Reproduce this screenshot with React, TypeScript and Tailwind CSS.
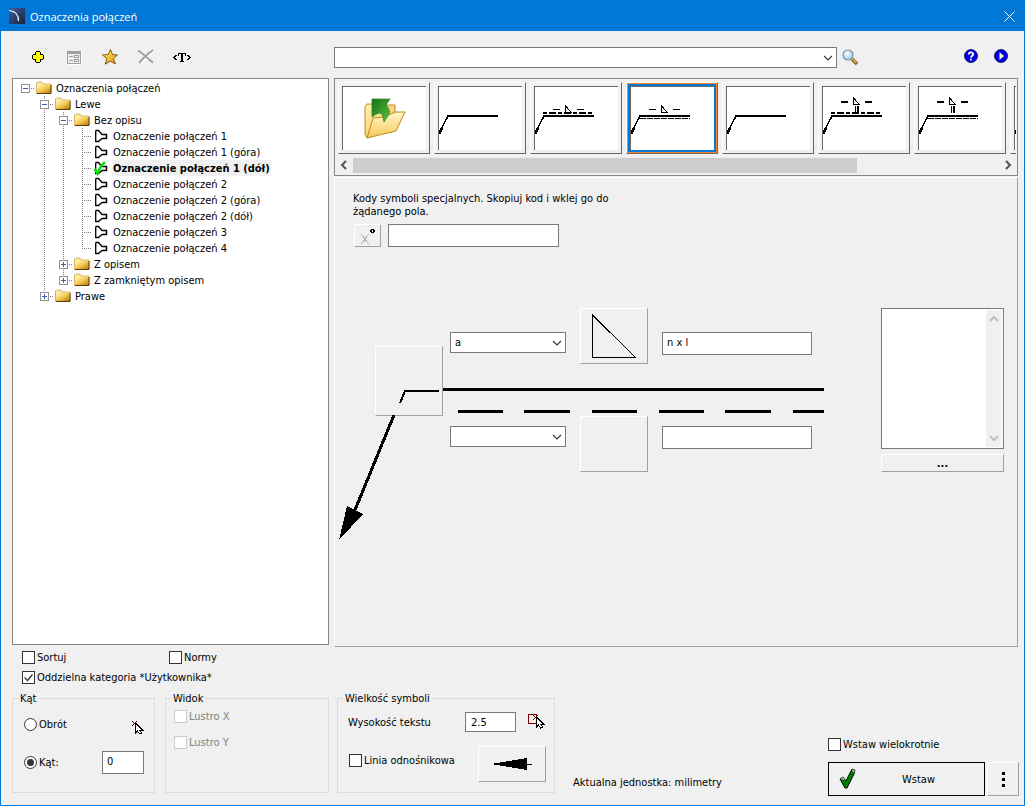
import React, { useState } from 'react';

type TreeNode = {
  id: string;
  label: string;
  open?: boolean;
  children?: TreeNode[];
};

type ThumbKind = 'plain' | 'above' | 'below' | 'above-tall' | 'below-tall';

const TREE: TreeNode = {
  id: 'root',
  label: 'Oznaczenia połączeń',
  open: true,
  children: [
    {
      id: 'lewe',
      label: 'Lewe',
      open: true,
      children: [
        {
          id: 'bez-opisu',
          label: 'Bez opisu',
          open: true,
          children: [
            { id: '1', label: 'Oznaczenie połączeń 1' },
            { id: '1g', label: 'Oznaczenie połączeń 1 (góra)' },
            { id: '1d', label: 'Oznaczenie połączeń 1 (dół)' },
            { id: '2', label: 'Oznaczenie połączeń 2' },
            { id: '2g', label: 'Oznaczenie połączeń 2 (góra)' },
            { id: '2d', label: 'Oznaczenie połączeń 2 (dół)' },
            { id: '3', label: 'Oznaczenie połączeń 3' },
            { id: '4', label: 'Oznaczenie połączeń 4' },
          ],
        },
        { id: 'z-opisem', label: 'Z opisem', children: [] },
        { id: 'z-zamknietym', label: 'Z zamkniętym opisem', children: [] },
      ],
    },
    { id: 'prawe', label: 'Prawe', children: [] },
  ],
};

const THUMBS: ThumbKind[] = ['plain', 'above', 'below', 'plain', 'above-tall', 'below-tall', 'plain'];

const BEVEL = 'border border-t-white border-l-white border-r-[#a0a0a0] border-b-[#a0a0a0]';
const FIELD = 'border border-[#7a7a7a] bg-white outline-none';

/* ---------- icons ---------- */

function AppIcon() {
  return (
    <svg width="16" height="16" viewBox="0 0 16 16">
      <defs>
        <linearGradient id="app" x1="0" y1="0" x2="1" y2="1">
          <stop offset="0" stopColor="#3d5f9c" />
          <stop offset="1" stopColor="#16233f" />
        </linearGradient>
      </defs>
      <rect width="16" height="16" fill="url(#app)" />
      <path d="M0 2.500C6 3 9.500 7 9.500 13" fill="none" stroke="#fff" strokeWidth="1.200" />
    </svg>
  );
}

function PlusIcon() {
  return (
    <svg width="14" height="14" viewBox="0 0 14 14" shapeRendering="crispEdges">
      <path d="M5 1h4v1h1v2h2v1h1v4h-1v1h-2v2h-1v1H5v-1H4v-2H2V9H1V5h1V4h2V2h1z" fill="#000" />
      <path d="M5 2h4v3h3v4H9v3H5V9H2V5h3z" fill="#ff0" />
    </svg>
  );
}

function FormIcon() {
  return (
    <svg width="16" height="16" viewBox="0 0 16 16" shapeRendering="crispEdges">
      <path d="M2 15h13V3h1v13H2z" fill="#fff" />
      <path d="M1 2h14v13H1z" fill="#a0a0a0" />
      <path d="M2 5h12v9H2z" fill="#f0f0f0" />
      <path d="M3 7h4v1H3zM3 11h4v1H3zM8 6h5v3H8zM8 10h5v3H8z" fill="#a0a0a0" />
      <path d="M9 7h3v1H9zM9 11h3v1H9z" fill="#f0f0f0" />
    </svg>
  );
}

function StarIcon() {
  return (
    <svg width="18" height="18" viewBox="0 0 18 18">
      <defs>
        <linearGradient id="star" x1="0" y1="0" x2="1" y2="1">
          <stop offset="0.2" stopColor="#ffe35c" />
          <stop offset="1" stopColor="#e08a08" />
        </linearGradient>
      </defs>
      <path
        d="M9.500 1.500l2 5 5 .5-4 3.800 2 5.200-5.200-2.800-5 3 1.500-5.700L1.500 7l5.800-.5z"
        fill="url(#star)"
        stroke="#8a5c14"
        strokeLinejoin="round"
      />
    </svg>
  );
}

function CrossIcon() {
  return (
    <svg width="18" height="16" viewBox="0 0 18 16" fill="none">
      <path d="M3 3l14 13M17 2L4 15" stroke="#fff" strokeWidth="1.500" />
      <path d="M1 1.500c5 3 10 8 15 12.500" stroke="#a0a0a0" strokeWidth="2" />
      <path d="M16 1C12 4 6 9 2 14" stroke="#a0a0a0" strokeWidth="2" />
    </svg>
  );
}

function TextCodeIcon() {
  return (
    <svg width="18" height="14" viewBox="0 0 18 14" shapeRendering="crispEdges">
      <path d="M3.500 5L1 7.500 3.500 10M14.500 5L17 7.500 14.500 10" fill="none" stroke="#000" />
      <path d="M5 3h8v3h-1V4h-2v7h1v1H7v-1h1V4H6v2H5z" fill="#000" />
    </svg>
  );
}

function SearchIcon() {
  return (
    <svg width="16" height="16" viewBox="0 0 16 16">
      <defs>
        <radialGradient id="lens" cx="0.4" cy="0.35" r="0.7">
          <stop offset="0" stopColor="#f4fbff" />
          <stop offset="1" stopColor="#9cc8ee" />
        </radialGradient>
      </defs>
      <path d="M10 10l5 5" stroke="#7a5a20" strokeWidth="3.400" />
      <path d="M10 9.500l4.500 4.500" stroke="#e8b84a" strokeWidth="1.600" />
      <circle cx="6" cy="6" r="5" fill="url(#lens)" stroke="#7f8fa0" strokeWidth="1.200" />
    </svg>
  );
}

function HelpIcon() {
  return (
    <svg width="14" height="14" viewBox="0 0 14 14">
      <circle cx="7" cy="7" r="6.500" fill="#0000d8" stroke="#000060" strokeWidth="0.800" />
      <path d="M4.800 5.500C4.800 2.800 9.200 2.800 9.200 5.300 9.200 6.900 7 6.800 7 8.700M7 9.700v1.800" fill="none" stroke="#fff" strokeWidth="1.800" />
    </svg>
  );
}

function PlayIcon() {
  return (
    <svg width="14" height="14" viewBox="0 0 14 14">
      <circle cx="7" cy="7" r="6.500" fill="#0000d8" stroke="#000060" strokeWidth="0.800" />
      <path d="M5.500 3l4.500 4-4.500 4z" fill="#fff" />
    </svg>
  );
}

function FolderIcon() {
  return (
    <svg width="16" height="14" viewBox="0 0 16 14">
      <defs>
        <linearGradient id="folder" x1="0" y1="0" x2="1" y2="1">
          <stop offset="0.1" stopColor="#fff0a8" />
          <stop offset="0.5" stopColor="#f3c850" />
          <stop offset="1" stopColor="#b87408" />
        </linearGradient>
      </defs>
      <path d="M.5 12.500V2L1.500 1h4.500l1 2h8v9.500z" fill="#fbe9a0" stroke="#c9a64a" strokeWidth="0.800" />
      <path d="M1 4h14v8H1z" fill="url(#folder)" />
      <path d="M1 12.500h14V4" fill="none" stroke="#5a3c08" />
    </svg>
  );
}

function JointIcon({ checked }: { checked: boolean }) {
  return (
    <svg width="16" height="16" viewBox="0 0 16 16" className="overflow-visible">
      <path
        d="M2.700 2.500H5.500L9 6.500h4.500M13.500 10.500H9L5.500 13.500H2.700V2.500"
        fill="#fff"
        stroke="#000"
        strokeWidth="1.300"
      />
      <path d="M13.500 6v5" stroke="#000" strokeWidth="1.500" />
      {checked && <path d="M1.500 9l3 4.500C6.500 8 8.500 5 12 2" fill="none" stroke="#00e400" strokeWidth="2.400" />}
    </svg>
  );
}

function OpenFolderIcon() {
  return (
    <svg width="42" height="42" viewBox="0 0 42 42">
      <defs>
        <linearGradient id="open-back" x1="0" y1="0" x2="1" y2="1">
          <stop offset="0" stopColor="#fff0b0" />
          <stop offset="1" stopColor="#f0c050" />
        </linearGradient>
        <linearGradient id="open-front" x1="0" y1="0" x2="0" y2="1">
          <stop offset="0" stopColor="#fff6cc" />
          <stop offset="1" stopColor="#f6c95a" />
        </linearGradient>
        <linearGradient id="open-arrow" x1="0" y1="0" x2="1" y2="1">
          <stop offset="0" stopColor="#156f15" />
          <stop offset="1" stopColor="#5cc43c" />
        </linearGradient>
      </defs>
      <path d="M1 9l2-3h6v1h22v20L3 40 1 36z" fill="url(#open-back)" stroke="#c08a1c" />
      <path d="M3 40l6-20 11-1 4-2 8-3h9L32 33z" fill="url(#open-front)" stroke="#c08a1c" strokeLinejoin="round" />
      <path
        d="M8 1h18l-4 6c3 3 4 6 3 9-1 3-3 4-5 8-1-4-1-8-4-9-2 0-4 1-8 4z"
        fill="url(#open-arrow)"
        stroke="#2e8b2e"
        strokeWidth="0.800"
      />
    </svg>
  );
}

function Chevron({ dir, bold, className = '' }: { dir: 'up' | 'down' | 'left' | 'right'; bold?: boolean; className?: string }) {
  const d = {
    up: 'M1 7l4-4 4 4',
    down: 'M1 3l4 4 4-4',
    left: 'M7 1L3 5l4 4',
    right: 'M3 1l4 4-4 4',
  }[dir];
  return (
    <svg width="10" height="10" viewBox="0 0 10 10" className={className}>
      <path d={d} fill="none" stroke="currentColor" strokeWidth={bold ? 2 : 1.1} />
    </svg>
  );
}

function PickIcon({ box }: { box?: boolean }) {
  return (
    <svg width="18" height="18" viewBox={box ? '0 0 18 18' : '-1 -3 18 18'} shapeRendering="crispEdges">
      {box && <path d="M.5 1.500h8v9h-8z" fill="none" stroke="#800000" />}
      <path d="M5 2l5 5M10 2L5 7" stroke={box ? '#800000' : '#400'} fill="none" />
      <path d="M8.500 4v10l2-2 2 3 2-1-2-3h3z" fill="#fff" stroke="#000" />
    </svg>
  );
}

function InsertIcon() {
  return (
    <svg width="18" height="22" viewBox="0 0 18 22">
      <path d="M1 11l3-2 3 4L13 1l3 1-1 4-7 14H6z" fill="#008000" stroke="#000" />
      <path d="M2 11l2-1 1 2M13 2l2 .5-.5 2" fill="none" stroke="#a8a8a8" strokeWidth="1.500" />
    </svg>
  );
}

/* ---------- small controls ---------- */

function Check({ label, defaultChecked, disabled }: { label: string; defaultChecked?: boolean; disabled?: boolean }) {
  return (
    <label className={`flex h-[13px] items-center gap-[2px] whitespace-nowrap ${disabled ? 'text-[#838383]' : ''}`}>
      <span className="grid shrink-0">
        <input
          type="checkbox"
          defaultChecked={defaultChecked}
          disabled={disabled}
          className="peer col-start-1 row-start-1 h-[13px] w-[13px] appearance-none border border-[#333] bg-white disabled:border-[#ccc]"
        />
        <svg viewBox="0 0 13 13" className="pointer-events-none invisible col-start-1 row-start-1 h-[13px] w-[13px] peer-checked:visible">
          <path d="M2.500 6.500l3 3 5-6" fill="none" stroke="#333" strokeWidth="1.300" />
        </svg>
      </span>
      {label}
    </label>
  );
}

function Radio({ label, defaultChecked }: { label: string; defaultChecked?: boolean }) {
  return (
    <label className="flex items-center gap-[2px]">
      <span className="grid shrink-0">
        <input
          type="radio"
          name="angle-mode"
          defaultChecked={defaultChecked}
          className="peer col-start-1 row-start-1 h-[13px] w-[13px] appearance-none rounded-full border border-[#333] bg-white"
        />
        <span className="pointer-events-none invisible col-start-1 row-start-1 h-[7px] w-[7px] place-self-center rounded-full bg-[#333] peer-checked:visible" />
      </span>
      {label}
    </label>
  );
}

function Combo({ label, options = [] }: { label: string; options?: string[] }) {
  return (
    <span className="grid">
      <select aria-label={label} className={`col-start-1 row-start-1 h-[21px] w-full appearance-none pl-1 ${FIELD}`}>
        {options.map((o) => (
          <option key={o}>{o}</option>
        ))}
      </select>
      <Chevron dir="down" className="pointer-events-none col-start-1 row-start-1 mr-1 self-center justify-self-end text-[#333]" />
    </span>
  );
}

/* ---------- tree ---------- */

function Guide({ up, down, right }: { up?: boolean; down?: boolean; right?: boolean }) {
  return (
    <svg width="19" height="16" viewBox="0 0 19 16" shapeRendering="crispEdges" className="shrink-0">
      <g stroke="#808080" strokeDasharray="1 1">
        {up && <path d="M9.500 0v8" />}
        {down && <path d="M9.500 8v8" />}
        {right && <path d="M9 8.500h10" />}
      </g>
    </svg>
  );
}

function TreeItem({
  node,
  trail,
  last,
  selected,
  onSelect,
}: {
  node: TreeNode;
  trail: boolean[];
  last: boolean;
  selected: string;
  onSelect: (id: string) => void;
}) {
  const [open, setOpen] = useState(!!node.open);
  const isRoot = node.id === 'root';
  const active = node.id === selected;

  return (
    <li>
      <div className="flex h-4 items-center">
        {trail.map((line, i) => (
          <Guide key={i} up={line} down={line} />
        ))}
        <span className="grid shrink-0">
          <span className="col-start-1 row-start-1">
            <Guide up={!isRoot} down={!last} right />
          </span>
          {node.children && (
            <button
              aria-label={open ? 'Zwiń' : 'Rozwiń'}
              onClick={() => setOpen(!open)}
              className="relative col-start-1 row-start-1 mt-1 ml-[5px] h-[9px] w-[9px]"
            >
              <svg width="9" height="9" viewBox="0 0 9 9" shapeRendering="crispEdges">
                <path d="M.5.5h8v8h-8z" fill="#fff" stroke="#919191" />
                <path d={open ? 'M2 4.500h5' : 'M2 4.500h5M4.500 2v5'} stroke="#3a5fb0" />
              </svg>
            </button>
          )}
        </span>
        <button onClick={() => onSelect(node.id)} className="ml-px flex h-4 items-center whitespace-nowrap">
          {node.children ? <FolderIcon /> : <JointIcon checked={active} />}
          <span className={`ml-[3px] px-px pt-px leading-[15px] ${active ? 'bg-[#f0f0f0] font-bold' : ''}`}>
            {node.label}
          </span>
        </button>
      </div>
      {open && node.children && node.children.length > 0 && (
        <ul>
          {node.children.map((child, i) => (
            <TreeItem
              key={child.id}
              node={child}
              trail={[...trail, !last]}
              last={i === node.children!.length - 1}
              selected={selected}
              onSelect={onSelect}
            />
          ))}
        </ul>
      )}
    </li>
  );
}

/* ---------- symbol strip ---------- */

function ThumbDrawing({ kind }: { kind: ThumbKind }) {
  const above = kind.startsWith('above');
  const below = kind.startsWith('below');
  const tall = kind.endsWith('tall');
  const y = tall ? 12 : 20;
  return (
    <svg width="83" height="63" viewBox="1 1 83 63" shapeRendering="crispEdges" fill="none" stroke="#000">
      <path d="M9 30h51" strokeWidth="2" />
      <path d="M10 30L1.500 46" strokeWidth="1.500" />
      <path d="M4 42L1.500 48" strokeWidth="2.500" />
      {above && <path d="M9 27h51" strokeWidth="2" strokeDasharray="4 2 7 2" />}
      {below && <path d="M10 32.500h50" strokeDasharray="6 1" />}
      {(above || below) && (
        <>
          <path d={`M31.500 ${y}v6.500h6z`} />
          <path
            d={tall ? 'M19 16h7M43 16h7' : 'M19 23.500h7M43 23.500h7'}
            strokeWidth={tall ? 2 : 1}
          />
        </>
      )}
      {tall && (
        <>
          <path d="M33.500 20v7" />
          <path d="M36 20v7" strokeWidth="2" />
        </>
      )}
    </svg>
  );
}

function Thumb({ label, active, onClick, children }: { label: string; active?: boolean; onClick?: () => void; children: React.ReactNode }) {
  return (
    <button
      aria-label={label}
      onClick={onClick}
      className="h-[72px] w-[92px] shrink-0 border border-t-white border-l-white border-r-[#696969] border-b-[#696969]"
    >
      <span className={`block h-full border ${active ? 'border-[#ff8020]' : 'border-transparent'}`}>
        <span className={`block h-full border-2 ${active ? 'border-[#0078d7]' : 'border-[#f0f0f0]'}`}>
          <span className="flex h-full items-center justify-center overflow-hidden border-t border-l border-[#696969] bg-white">
            {children}
          </span>
        </span>
      </span>
    </button>
  );
}

function SymbolStrip() {
  const [active, setActive] = useState(2);
  return (
    <section className="border border-[#828790] px-[3px] pt-[3px] pb-[2px]">
      <div className="-mr-[2px] flex gap-1 overflow-hidden">
        <Thumb label="Folder nadrzędny">
          <OpenFolderIcon />
        </Thumb>
        {THUMBS.map((kind, i) => (
          <Thumb key={i} label={`Symbol ${i + 1}`} active={i === active} onClick={() => setActive(i)}>
            <ThumbDrawing kind={kind} />
          </Thumb>
        ))}
      </div>
      <div className="-mr-[2px] mt-[3px] flex h-4 items-center text-[#555]">
        <button aria-label="Przewiń w lewo" className="flex w-[15px] justify-start pl-px">
          <Chevron dir="left" bold />
        </button>
        <div className="h-[15px] flex-1">
          <div className="h-full w-[78%] bg-[#cdcdcd]" />
        </div>
        <button aria-label="Przewiń w prawo" className="flex w-[17px] justify-center">
          <Chevron dir="right" bold />
        </button>
      </div>
    </section>
  );
}

/* ---------- symbol editor ---------- */

function WeldLines() {
  return (
    <svg
      width="490"
      height="240"
      viewBox="335 308 490 240"
      className="pointer-events-none absolute top-0 left-0"
      shapeRendering="crispEdges"
    >
      <path d="M443 388h381v3H443z" />
      <path d="M458 410h45v3h-45zM524 410h46v3h-46zM592 410h45v3h-45zM659 410h45v3h-45zM725 410h46v3h-46zM793 410h31v3h-31z" />
      <path d="M394 415L355 510" stroke="#000" strokeWidth="3" />
      <path d="M339 540L347 506 363 514z" />
    </svg>
  );
}

function SymbolEditor() {
  return (
    <section className={`mt-px flex-1 pt-[14px] ${BEVEL}`}>
      <div className="ml-[18px]">
        <label htmlFor="codes" className="block w-[260px]">
          Kody symboli specjalnych. Skopiuj kod i wklej go do żądanego pola.
        </label>
        <div className="mt-[6px] ml-px flex gap-[7px]">
          <button aria-label="Symbol specjalny" className={`flex h-[23px] w-[27px] items-center justify-center ${BEVEL}`}>
            <svg width="18" height="18" viewBox="0 0 18 18" shapeRendering="crispEdges" fill="none">
              <path d="M2.500 7l7 10M9.500 7l-7 10" stroke="#b4b4b4" />
              <path d="M12 2h3v1h1v2h-1v1h-3V5h-1V3h1z" fill="#000" />
              <path d="M13 3h1v2h-1z" fill="#f0f0f0" />
            </svg>
          </button>
          <input id="codes" className={`h-[23px] w-[171px] px-1 ${FIELD}`} />
        </div>
      </div>

      <div className="relative mt-[61px] flex items-start pr-[13px] pb-[76px] pl-10">
        <WeldLines />
        <button aria-label="Punkt zaczepienia" className={`mt-[38px] h-[70px] w-[68px] shrink-0 ${BEVEL}`}>
          <svg width="66" height="68" viewBox="0 0 66 68" fill="none" stroke="#000" strokeWidth="2" shapeRendering="crispEdges">
            <path d="M63 44H29l-5 12" />
          </svg>
        </button>
        <div className="mt-6 ml-[7px] flex w-[116px] shrink-0 flex-col gap-[73px]">
          <Combo label="Grubość spoiny górnej" options={['a', 's', 'z']} />
          <Combo label="Grubość spoiny dolnej" />
        </div>
        <div className="ml-[14px] flex shrink-0 flex-col gap-[52px]">
          <button aria-label="Symbol górny" className={`h-14 w-[68px] ${BEVEL}`}>
            <svg width="66" height="54" viewBox="0 0 66 54" fill="none" stroke="#000" shapeRendering="crispEdges">
              <path d="M11.500 6v42.500h43z" />
            </svg>
          </button>
          <button aria-label="Symbol dolny" className={`h-14 w-[68px] ${BEVEL}`} />
        </div>
        <div className="mt-6 ml-[14px] flex w-[150px] shrink-0 flex-col gap-[71px]">
          <input aria-label="Długość spoiny górnej" defaultValue="n x l" className={`h-[23px] px-1 pb-[3px] ${FIELD}`} />
          <input aria-label="Długość spoiny dolnej" className={`h-[23px] px-1 pb-[3px] ${FIELD}`} />
        </div>
        <div className="ml-auto flex w-[123px] shrink-0 flex-col gap-[5px]">
          <div className="flex h-[141px] border border-[#7a7a7a] bg-white p-px">
            <textarea aria-label="Opis" className="min-w-0 flex-1 resize-none overflow-hidden outline-none" />
            <div className="flex w-4 flex-col items-center justify-between bg-[#f0f0f0] py-1 text-[#bfbfbf]">
              <Chevron dir="up" bold />
              <Chevron dir="down" bold />
            </div>
          </div>
          <button className={`h-[18px] font-bold ${BEVEL}`}>...</button>
        </div>
      </div>
    </section>
  );
}

/* ---------- footer ---------- */

function Group({ title, className, children }: { title: string; className: string; children: React.ReactNode }) {
  return (
    <fieldset className={`mb-[3px] h-[101px] shrink-0 border border-[#dcdcdc] ${className}`}>
      <legend className="ml-[5px] px-[2px]">{title}</legend>
      {children}
    </fieldset>
  );
}

function Footer() {
  return (
    <footer className="px-[11px] pt-1 pb-[9px]">
      <div className="ml-[10px] grid w-[300px] grid-cols-[147px_1fr] gap-y-[7px]">
        <Check label="Sortuj" />
        <Check label="Normy" />
        <div className="col-span-2">
          <Check label="Oddzielna kategoria *Użytkownika*" defaultChecked />
        </div>
      </div>

      <div className="-mr-[6px] mt-2 flex items-end">
        <Group title="Kąt" className="w-[143px]">
          <div className="flex flex-col gap-[15px] pt-2 pr-[10px] pl-[11px]">
            <div className="flex h-[23px] items-center justify-between">
              <Radio label="Obrót" />
              <button aria-label="Wskaż kąt">
                <PickIcon />
              </button>
            </div>
            <div className="flex h-[23px] items-center justify-between">
              <Radio label="Kąt:" defaultChecked />
              <input aria-label="Wartość kąta" defaultValue="0" className={`h-[23px] w-[42px] px-1 pb-[3px] ${FIELD}`} />
            </div>
          </div>
        </Group>
        <Group title="Widok" className="ml-[10px] w-[164px]">
          <div className="flex flex-col gap-[13px] pt-[5px] pl-2">
            <Check label="Lustro X" disabled />
            <Check label="Lustro Y" disabled />
          </div>
        </Group>
        <Group title="Wielkość symboli" className="ml-2 w-[218px]">
          <div className="flex flex-col gap-[14px] pt-[7px] pr-2 pl-[10px]">
            <div className="flex h-5 items-center">
              <label htmlFor="text-height" className="flex-1">
                Wysokość tekstu
              </label>
              <input id="text-height" defaultValue="2.5" className={`h-5 w-[51px] px-[5px] ${FIELD}`} />
              <button aria-label="Wskaż wysokość" className="ml-3">
                <PickIcon box />
              </button>
            </div>
            <div className="flex h-9 items-start justify-between pl-px">
              <div className="pt-2">
                <Check label="Linia odnośnikowa" />
              </div>
              <button aria-label="Styl strzałki" className={`flex h-9 w-[68px] items-center justify-center ${BEVEL}`}>
                <svg width="42" height="12" viewBox="0 0 42 12" shapeRendering="crispEdges">
                  <path d="M0 6L36 0v12zM36 5.500h5v1h-5z" />
                </svg>
              </button>
            </div>
          </div>
        </Group>
        <p className="mb-[7px] ml-[18px] whitespace-nowrap">Aktualna jednostka: milimetry</p>
        <div className="ml-auto flex flex-col gap-[11px]">
          <Check label="Wstaw wielokrotnie" />
          <div className="flex gap-[2px]">
            <button className="flex h-[34px] w-[157px] items-center border border-black pl-[10px]">
              <InsertIcon />
              <span className="flex-1 pr-1 text-center">Wstaw</span>
            </button>
            <button aria-label="Więcej" className={`flex h-[34px] w-8 items-center justify-center ${BEVEL}`}>
              <svg width="3" height="15" viewBox="0 0 3 15" shapeRendering="crispEdges">
                <path d="M0 0h3v3H0zM0 6h3v3H0zM0 12h3v3H0z" />
              </svg>
            </button>
          </div>
        </div>
      </div>
    </footer>
  );
}

const TOOLS = [
  { label: 'Dodaj', icon: <PlusIcon /> },
  { label: 'Właściwości', icon: <FormIcon /> },
  { label: 'Ulubione', icon: <StarIcon /> },
  { label: 'Usuń', icon: <CrossIcon /> },
  { label: 'Zmień nazwę', icon: <TextCodeIcon /> },
];

export default function App() {
  const [selected, setSelected] = useState('1d');

  return (
    <div className="flex min-h-screen flex-col border border-[#0078d7] bg-[#f0f0f0] font-['DejaVu_Sans_Condensed','Noto_Sans',sans-serif] text-[11px] leading-[13px] text-black">
      <header className="flex h-[30px] items-center bg-[#0078d7] pr-[9px] pl-2 text-white">
        <AppIcon />
        <h1 className="ml-[5px] flex-1 font-['Open_Sans',sans-serif] text-[11px]">Oznaczenia połączeń</h1>
        <button aria-label="Zamknij">
          <svg width="11" height="11" viewBox="0 0 11 11">
            <path d="M.5.5l10 10M10.500.5l-10 10" stroke="#fff" />
          </svg>
        </button>
      </header>

      <main className="flex flex-1 gap-[5px] pr-[6px] pl-[11px]">
        <div className="flex w-[317px] shrink-0 flex-col pb-[2px]">
          <div className="flex h-[47px] items-center pt-[5px] pl-2">
            {TOOLS.map((t) => (
              <button key={t.label} aria-label={t.label} className="flex h-9 w-9 items-center justify-center">
                {t.icon}
              </button>
            ))}
          </div>
          <ul className="flex-1 border border-[#828790] bg-white pt-px pl-[3px]">
            <TreeItem node={TREE} trail={[]} last selected={selected} onSelect={setSelected} />
          </ul>
        </div>

        <div className="flex min-w-0 flex-1 flex-col">
          <div className="flex h-[47px] items-center pt-[6px] pr-[10px]">
            <div className="min-w-0 flex-1">
              <Combo label="Szukaj" />
            </div>
            <button aria-label="Szukaj" className="ml-[5px] pb-px">
              <SearchIcon />
            </button>
            <div className="ml-[106px] flex gap-4 pb-1">
              <button aria-label="Pomoc">
                <HelpIcon />
              </button>
              <button aria-label="Samouczek">
                <PlayIcon />
              </button>
            </div>
          </div>
          <SymbolStrip />
          <SymbolEditor />
        </div>
      </main>

      <Footer />
    </div>
  );
}
